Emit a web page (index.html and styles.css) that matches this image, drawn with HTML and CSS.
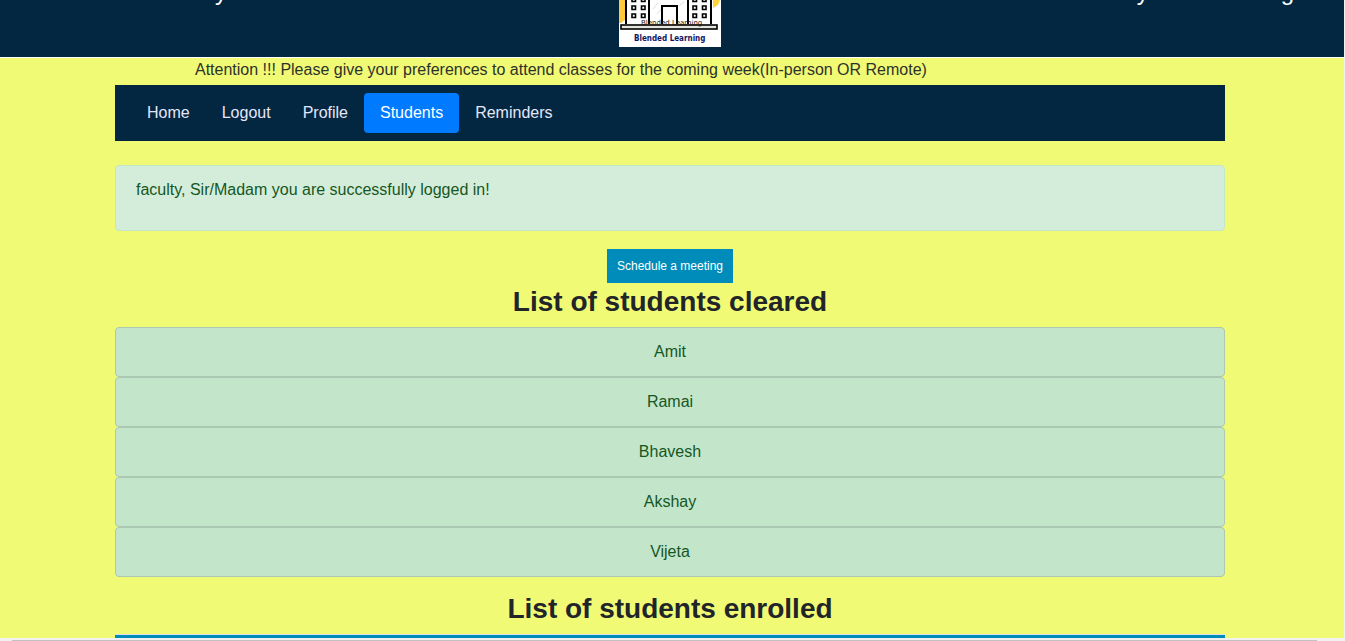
FILE: index.html
```html
<!DOCTYPE html>
<html lang="en">
<head>
<meta charset="utf-8">
<title>Blended Learning</title>
<link rel="stylesheet" href="styles.css">
</head>
<body>
<div class="window">
  <div class="page">
    <header class="banner">
      <div class="banner-side banner-left"><span>y</span></div>
      <svg class="logo" viewBox="0 0 102 47" role="img" aria-label="Blended Learning">
        <rect width="102" height="47" fill="#fff"/>
        <path d="M0 0H6V20L2 23H0Z" fill="#ffc93c"/>
        <path d="M94 0H101L99 5L94 8Z" fill="#ffd43b"/>
        <path d="M34 9l5-6M38 14l6-7M60 6l5-4" stroke="#ddd" stroke-width="1"/>
        <path d="M7 0V24M30 0V24M69 0V24M92 0V24" stroke="#000" stroke-width="2" fill="none"/>
        <path d="M43 24V6H58V24" stroke="#000" stroke-width="2" fill="none"/>
        <g fill="none" stroke="#000" stroke-width="1.6">
          <path d="M13 -2h3.500v3.500h-3.500zM22.500 -2h3.500v3.500h-3.500zM74 -2h3.500v3.500h-3.500zM83.500 -2h3.500v3.500h-3.500z"/>
          <path d="M13 6h3.500v3.500h-3.500zM22.500 6h3.500v3.500h-3.500zM74 6h3.500v3.500h-3.500zM83.500 6h3.500v3.500h-3.500z"/>
          <path d="M13 14h3.500v3.500h-3.500zM22.500 14h3.500v3.500h-3.500zM74 14h3.500v3.500h-3.500zM83.500 14h3.500v3.500h-3.500z"/>
        </g>
        <rect x="2" y="25" width="96" height="4" fill="#e5e5df" stroke="#000" stroke-width="1.6"/>
        <text class="logo-sign" x="22" y="25">Blended Learning</text>
        <text class="logo-name" x="15" y="41">Blended Learning</text>
      </svg>
      <div class="banner-side banner-right"><span>y</span><span>g</span></div>
    </header>
    <main class="container">
      <p class="notice">Attention !!! Please give your preferences to attend classes for the coming week(In-person OR Remote)</p>
      <nav class="nav">
        <a class="nav-link" href="#">Home</a>
        <a class="nav-link" href="#">Logout</a>
        <a class="nav-link" href="#">Profile</a>
        <a class="nav-link active" href="#">Students</a>
        <a class="nav-link" href="#">Reminders</a>
      </nav>
      <div class="alert" role="status">faculty, Sir/Madam you are successfully logged in!</div>
      <div class="actions"><button class="button" type="button">Schedule a meeting</button></div>
      <h2 class="heading">List of students cleared</h2>
      <ul class="students">
        <li class="student">Amit</li>
        <li class="student">Ramai</li>
        <li class="student">Bhavesh</li>
        <li class="student">Akshay</li>
        <li class="student">Vijeta</li>
      </ul>
      <h2 class="heading">List of students enrolled</h2>
      <div class="enrolled"></div>
    </main>
  </div>
  <div class="scroll-track"><div class="scroll-thumb"></div></div>
</div>
</body>
</html>
```
FILE: styles.css
```css
* { box-sizing: border-box; }

body {
  margin: 0;
  overflow: hidden;
  font-family: "Liberation Sans", Arial, sans-serif;
  font-size: 16px;
  line-height: 24px;
  color: #212529;
}

.window {
  display: flex;
  flex-direction: column;
  height: 100vh;
  background: #f1f1f1;
}

.page {
  flex: 1;
  min-height: 0;
  overflow: hidden;
  margin-right: 1px;
  background: #f0fa75;
}

.banner {
  display: grid;
  grid-template-columns: 1fr 102px 1fr;
  align-items: start;
  padding: 0 4px 10px 0;
  overflow: hidden;
  background: #032740;
  border-bottom: 1px solid #fff;
}

.banner-side {
  display: flex;
  margin-top: -20px;
  font-size: 24px;
  line-height: 24px;
  color: #fff;
}

.banner-left { padding-left: 215px; }

.banner-right {
  justify-content: flex-end;
  gap: 132px;
  padding-right: 46px;
}

.logo {
  display: block;
  width: 102px;
  height: 47px;
}

.logo-sign {
  font: 7px "DejaVu Sans", sans-serif;
  fill: #2c1606;
}

.logo-name {
  font: bold 8px "DejaVu Sans Condensed", "DejaVu Sans", sans-serif;
  fill: #14145f;
}

.container {
  max-width: 1144px;
  margin: 0 auto;
  padding: 0 19px 0 15px;
}

.notice {
  margin: 0;
  padding: 0 80px 3px;
  color: #2d3229;
}

.nav {
  display: flex;
  padding: 8px 16px;
  background: #032740;
}

.nav-link {
  padding: 8px 16px;
  border-radius: 4px;
  color: #e6e6fa;
  text-decoration: none;
}

.nav-link.active {
  background: #007bff;
  color: #fff;
}

.alert {
  min-height: 66px;
  margin: 24px 0 18px;
  padding: 12px 20px;
  background: #d4edda;
  border: 1px solid #c3e6cb;
  border-radius: 4px;
  color: #155724;
}

.actions {
  display: flex;
  justify-content: center;
}

.button {
  padding: 10px;
  border: 0;
  background: #008cba;
  color: #fff;
  font-family: inherit;
  font-size: 12px;
  line-height: 14px;
}

.heading {
  margin: 0;
  padding: 2px 0 8px;
  font-size: 28px;
  line-height: 34px;
  text-align: center;
}

.students {
  margin: 0 0 13px;
  padding: 0;
  list-style: none;
}

.student {
  padding: 12px 20px;
  background: #c3e6cb;
  border: 1px solid #abc9b2;
  border-radius: 4px;
  color: #155724;
  text-align: center;
}

.enrolled {
  height: 40px;
  border-top: 1px solid #dee2e6;
  background: #008cba;
}

.scroll-track {
  height: 3px;
  padding: 2px 28px 0 12px;
  background: #f1f1f1;
}

.scroll-thumb {
  height: 1px;
  background: #c1c1c1;
}
```
